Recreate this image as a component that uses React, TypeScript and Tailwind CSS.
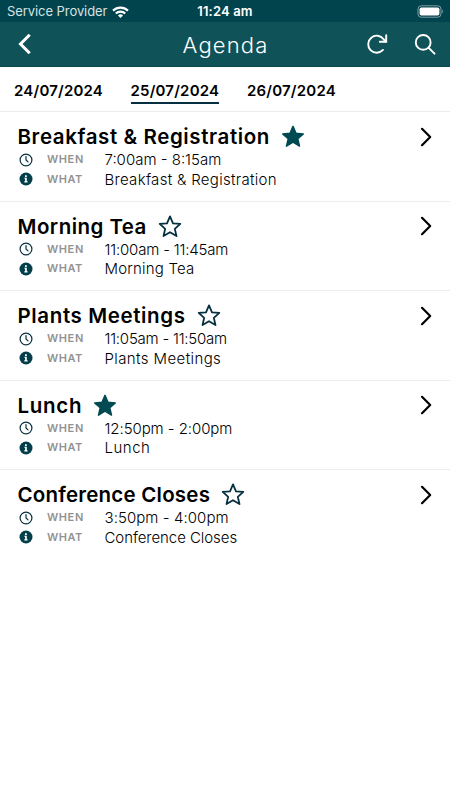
import { clsx } from 'clsx';

type Session = {
   title: string;
   when: string;
   starred: boolean;
   titleClass: string;
   whenClass: string;
   whatClass: string;
};

const dates = ['24/07/2024', '25/07/2024', '26/07/2024'];

const sessions: Session[] = [
   {
      title: 'Breakfast & Registration',
      when: '7:00am - 8:15am',
      starred: true,
      titleClass: 'tracking-[0.6px]',
      whenClass: 'tracking-[0px]',
      whatClass: 'tracking-[0.3px]',
   },
   {
      title: 'Morning Tea',
      when: '11:00am - 11:45am',
      starred: false,
      titleClass: 'tracking-[0.47px]',
      whenClass: 'tracking-[-0.18px]',
      whatClass: 'tracking-[0.2px]',
   },
   {
      title: 'Plants Meetings',
      when: '11:05am - 11:50am',
      starred: false,
      titleClass: 'tracking-[0.62px]',
      whenClass: 'tracking-[-0.23px]',
      whatClass: 'tracking-[0.4px]',
   },
   {
      title: 'Lunch',
      when: '12:50pm - 2:00pm',
      starred: true,
      titleClass: 'tracking-[0.7px]',
      whenClass: 'tracking-[-0.07px]',
      whatClass: 'tracking-[0.5px]',
   },
   {
      title: 'Conference Closes',
      when: '3:50pm - 4:00pm',
      starred: false,
      titleClass: 'tracking-[0.22px]',
      whenClass: 'tracking-[0.07px]',
      whatClass: 'tracking-[-0.06px]',
   },
];

const Star = ({ filled }: { filled: boolean }) => (
   <svg
      viewBox="0 0 24 24"
      className={clsx(
         'size-6 shrink-0',
         filled ? 'fill-[#024a52] stroke-[#024a52]' : 'fill-none stroke-[#06303f]'
      )}
      strokeWidth={filled ? 1.5 : 1.8}
      strokeLinejoin="round"
   >
      <path d="M12 1.4 15 8.3 22.3 8.9 16.8 13.8 18.5 21.1 12 17.2 5.5 21.1 7.2 13.8 1.7 8.9 9 8.3Z" />
   </svg>
);

const ClockIcon = () => (
   <svg
      viewBox="0 0 14 14"
      className="size-3.5 fill-none stroke-[#06303f]"
      strokeWidth="1.2"
      strokeLinecap="round"
   >
      <circle cx="7" cy="7" r="5.9" />
      <path d="M7 3.6V7l2 1.9" />
   </svg>
);

const InfoIcon = () => (
   <svg viewBox="0 0 14 14" className="size-3.5">
      <circle cx="7" cy="7" r="6.5" className="fill-[#033f4a]" />
      <path
         d="M6 3.2h1.8v1.7H6zM5.4 5.7h2.4v3.6h.8v1.1H5.3V9.3h.8V6.8h-.7z"
         className="fill-white"
      />
   </svg>
);

const StatusBar = () => (
   <div className="flex h-[22px] items-center bg-[#02444e] pt-px text-[13px] text-white">
      <div className="flex w-[150px] items-center pl-[7px]">
         <span className="tracking-[-0.07px] text-[#d5e2e4]">Service Provider</span>
         <svg viewBox="0 0 17 12" className="ml-[5px] h-3 w-[17px] fill-none stroke-white">
            <path d="M1 4.6a10.7 10.7 0 0 1 15 0" strokeWidth="2.2" />
            <path d="M3.8 7.6a6.7 6.7 0 0 1 9.4 0" strokeWidth="2.1" />
            <path d="M8.5 12 6 9.4a3.6 3.6 0 0 1 5 0Z" className="fill-white" stroke="none" />
         </svg>
      </div>
      <div className="flex-1 text-center font-semibold tracking-[0.15px]">11:24 am</div>
      <div className="flex w-[150px] justify-end pr-[6px] pb-px">
         <svg viewBox="0 0 27 13" className="h-[13px] w-[27px]">
            <rect x="1" y="0.8" width="23" height="11.4" rx="3.2" fill="none" stroke="#7f9da2" />
            <rect x="2.6" y="2.4" width="19.8" height="8.2" rx="1.8" fill="#fff" />
            <path d="M25.3 4.6c1.2.5 1.2 3.3 0 3.8z" fill="#7f9da2" />
         </svg>
      </div>
   </div>
);

const Header = () => (
   <header className="flex h-[45px] items-center justify-between border-b border-[#0a464c] bg-[#0f5257] pr-[14px] pl-[17px] text-white">
      <svg
         viewBox="0 0 16 22"
         className="mr-[52px] h-[22px] w-4 fill-none stroke-white"
         strokeWidth="3"
      >
         <path d="M12.7 1.8 3.5 11l9.2 9.2" />
      </svg>
      <h1 className="pt-0.5 text-[22px] leading-none font-light tracking-[1.15px]">Agenda</h1>
      <div className="flex items-center gap-[26px]">
         <svg
            viewBox="0 0 22 22"
            className="size-[22px] fill-none stroke-white"
            strokeWidth="1.9"
            strokeLinecap="round"
         >
            <path d="M17 16.9A8.5 8.5 0 1 1 17.6 6.2L19.6 8.6" />
            <path d="M20.2 2.3V8.8H13.8" />
         </svg>
         <svg
            viewBox="0 0 22 22"
            className="size-[22px] fill-none stroke-white"
            strokeWidth="1.9"
            strokeLinecap="round"
         >
            <circle cx="9.2" cy="9.4" r="7.4" />
            <path d="m14.7 14.9 5.8 5.8" />
         </svg>
      </div>
   </header>
);

const DateTabs = () => (
   <nav className="flex h-[44px] gap-[28.5px] pt-[13px] pl-[14px]">
      {dates.map((date) => (
         <div
            key={date}
            className={clsx(
               'h-6 w-[88px] border-b-2 text-[15px] leading-[21px] font-semibold tracking-[0.2px] whitespace-nowrap text-black',
               date === '25/07/2024' ? 'border-[#06303f]' : 'border-transparent'
            )}
         >
            {date}
         </div>
      ))}
   </nav>
);

const SessionRow = ({ session }: { session: Session }) => (
   <li className="flex h-[89.5px] justify-between border-t border-[#ececec] pr-[17px] pl-[17.5px]">
      <div className="pt-3">
         <div className="flex h-[26px] items-center gap-[11px]">
            <h2
               className={clsx(
                  'text-[20.5px] leading-[26px] font-semibold whitespace-nowrap text-black',
                  session.titleClass
               )}
            >
               {session.title}
            </h2>
            <Star filled={session.starred} />
         </div>
         <div className="grid grid-cols-[28px_57.5px_auto] items-center pl-[1.5px] text-[15px] leading-[19.5px] font-light text-black">
            <ClockIcon />
            <span className="text-[11px] font-semibold tracking-[0.6px] text-[#929292]">WHEN</span>
            <span className={session.whenClass}>{session.when}</span>
            <InfoIcon />
            <span className="text-[11px] font-semibold tracking-[0.5px] text-[#929292]">WHAT</span>
            <span className={session.whatClass}>{session.title}</span>
         </div>
      </div>
      <svg
         viewBox="0 0 14 20"
         className="mt-[14.5px] h-5 w-3.5 fill-none stroke-black"
         strokeWidth="2.2"
         strokeLinecap="round"
         strokeLinejoin="round"
      >
         <path d="m3 1.8 8.2 8.2L3 18.2" />
      </svg>
   </li>
);

const App = () => {
   return (
      <main className="min-h-screen w-full bg-white font-[Inter,'Liberation_Sans',sans-serif]">
         <StatusBar />
         <Header />
         <DateTabs />
         <ul>
            {sessions.map((session) => (
               <SessionRow key={session.title} session={session} />
            ))}
         </ul>
      </main>
   );
};
export default App;
